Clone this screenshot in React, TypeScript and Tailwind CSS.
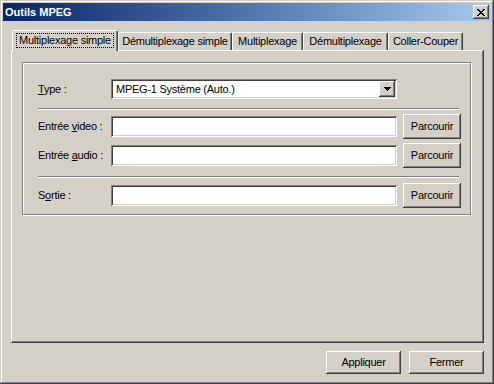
import React from "react";

const raised =
  "shadow-[inset_-1px_-1px_#404040,inset_1px_1px_#ffffff,inset_-2px_-2px_#808080,inset_2px_2px_#d4d0c8]";
const sunken =
  "shadow-[inset_1px_1px_#808080,inset_-1px_-1px_#ffffff,inset_2px_2px_#404040,inset_-2px_-2px_#d4d0c8]";

function CloseGlyph() {
  return (
    <svg width="8" height="7" viewBox="0 0 8 7" shapeRendering="crispEdges">
      <path
        fill="#000"
        d="M0 0h2v1H0z M6 0h2v1H6z M1 1h2v1H1z M5 1h2v1H5z M2 2h4v1H2z M3 3h2v1H3z M2 4h4v1H2z M1 5h2v1H1z M5 5h2v1H5z M0 6h2v1H0z M6 6h2v1H6z"
      />
    </svg>
  );
}

function ArrowGlyph() {
  return (
    <svg width="7" height="4" viewBox="0 0 7 4" shapeRendering="crispEdges">
      <path fill="#000" d="M0 0h7v1H0z M1 1h5v1H1z M2 2h3v1H2z M3 3h1v1H3z" />
    </svg>
  );
}

function Sep() {
  return <div className="w-[421px] h-[2px] border-t border-b border-t-[#808080] border-b-white" />;
}

function FileRow({ label, className }: { label: React.ReactNode; className: string }) {
  return (
    <div className={"flex items-center h-[25px] " + className}>
      <div className="w-[73px]">{label}</div>
      <div className={"w-[286px] h-[21px] bg-white " + sunken} />
      <div className={"ml-[6px] w-[58px] h-[25px] flex items-center justify-center bg-[#d4d0c8] " + raised}>
        Parcourir
      </div>
    </div>
  );
}

export default function App() {
  const tabs = [
    { label: "Multiplexage simple", w: "w-[106px]", sel: true },
    { label: "Démultiplexage simple", w: "w-[114px]", sel: false },
    { label: "Multiplexage", w: "w-[71px]", sel: false },
    { label: "Démultiplexage", w: "w-[85px]", sel: false },
    { label: "Coller-Couper", w: "w-[75px]", sel: false },
  ];
  return (
    <div
      className={
        "w-[494px] h-[384px] bg-[#d4d0c8] p-[3px] flex flex-col text-black text-[11px] tracking-[-0.25px] font-['Liberation_Sans',Arial,sans-serif] shadow-[inset_-1px_-1px_#404040,inset_1px_1px_#d4d0c8,inset_-2px_-2px_#808080,inset_2px_2px_#ffffff]"
      }
    >
      {/* Title bar */}
      <div className="h-[18px] bg-linear-to-r from-[#0a246a] to-[#a6caf0] flex items-center justify-between pl-[2px] pr-[2px]">
        <span className="text-white font-bold tracking-normal leading-none">Outils MPEG</span>
        <div className={"w-[16px] h-[14px] bg-[#d4d0c8] flex items-center justify-center " + raised}>
          <CloseGlyph />
        </div>
      </div>

      <div className="flex flex-col pl-[8px] pt-[9px]">
        {/* Tab strip */}
        <div className="flex items-end h-[20px] pl-[1px]">
          {tabs.map((t) =>
            t.sel ? (
              <div
                key={t.label}
                className={
                  "relative z-10 -mb-px h-[21px] bg-[#d4d0c8] flex items-center justify-center pb-[1px] border-l border-t border-r border-l-white border-t-white border-r-[#404040] rounded-t-[2px] shadow-[inset_-1px_0_#808080] " +
                  t.w
                }
              >
                <span className="border border-dotted border-black px-[2px] leading-[13px]">{t.label}</span>
              </div>
            ) : (
              <div
                key={t.label}
                className={
                  "h-[18px] bg-[#d4d0c8] flex items-center justify-center border-l border-t border-r border-l-white border-t-white border-r-[#404040] rounded-t-[2px] shadow-[inset_-1px_0_#808080] " +
                  t.w
                }
              >
                {t.label}
              </div>
            )
          )}
        </div>

        {/* Tab panel */}
        <div
          className={
            "w-[473px] h-[293px] pl-[11px] pt-[12px] shadow-[inset_-1px_-1px_#404040,inset_1px_1px_#ffffff,inset_-2px_-2px_#808080]"
          }
        >
          <div className="w-[449px] h-[153px] border border-[#808080] shadow-[1px_1px_0_#ffffff,inset_1px_1px_0_#ffffff] pl-[15px] pt-[16px] flex flex-col">
            <div className="flex items-center h-[20px]">
              <div className="w-[73px]">
                <span className="underline">T</span>ype :
              </div>
              <div className={"w-[286px] h-[20px] bg-white flex items-center justify-between pl-[5px] pr-[2px] " + sunken}>
                <span>MPEG-1 Système (Auto.)</span>
                <div className={"w-[16px] h-[16px] bg-[#d4d0c8] flex items-center justify-center " + raised}>
                  <ArrowGlyph />
                </div>
              </div>
            </div>
            <div className="mt-[9px]">
              <Sep />
            </div>
            <FileRow
              className="mt-[4px]"
              label={
                <>
                  Entrée <span className="underline">v</span>ideo :
                </>
              }
            />
            <FileRow
              className="mt-[4px]"
              label={
                <>
                  Entrée <span className="underline">a</span>udio :
                </>
              }
            />
            <div className="mt-[8px]">
              <Sep />
            </div>
            <FileRow
              className="mt-[5px]"
              label={
                <>
                  S<span className="underline">o</span>rtie :
                </>
              }
            />
          </div>
        </div>

        {/* Bottom buttons */}
        <div className="mt-[8px] flex justify-end gap-[8px] pr-[7px]">
          <div className={"w-[75px] h-[23px] flex items-center justify-center bg-[#d4d0c8] " + raised}>Appliquer</div>
          <div className={"w-[75px] h-[23px] flex items-center justify-center bg-[#d4d0c8] " + raised}>Fermer</div>
        </div>
      </div>
    </div>
  );
}
